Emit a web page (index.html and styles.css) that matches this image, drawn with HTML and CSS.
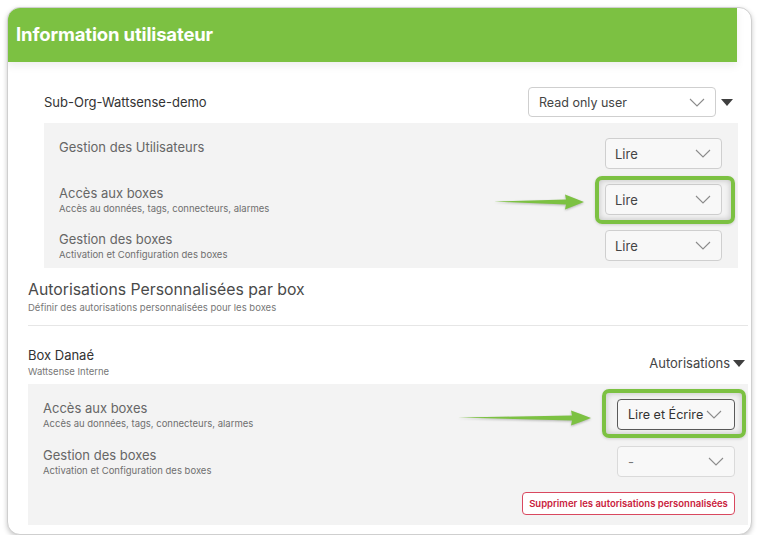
FILE: index.html
```html
<!DOCTYPE html>
<html>

<head>
    <meta charset="utf-8">
    <title>Information utilisateur</title>
    <meta name="viewport" content="width=device-width, initial-scale=1">
    <link rel="stylesheet" href="styles.css">
</head>

<body>
    <div class="card">
        <div class="card-header">
            <h1>Information utilisateur</h1>
        </div>

        <!-- organisation role -->
        <div class="org">
            <div class="org-row">
                <span class="org-name">Sub-Org-Wattsense-demo</span>
                <div class="org-role">
                    <div class="select select-role">
                        <span>Read only user</span>
                        <svg class="chevron" width="16" height="9" viewBox="0 0 16 9"><polyline points="1,1 8,8 15,1" /></svg>
                    </div>
                    <svg class="caret" width="12" height="7" viewBox="0 0 12 7"><polygon points="0,0 12,0 6,7" /></svg>
                </div>
            </div>

            <div class="perm-box">
                <div class="perm-row">
                    <div class="perm-label">
                        <div class="perm-title">Gestion des Utilisateurs</div>
                    </div>
                    <div class="select">
                        <span>Lire</span>
                        <svg class="chevron" width="16" height="9" viewBox="0 0 16 9"><polyline points="1,1 8,8 15,1" /></svg>
                    </div>
                </div>
                <div class="perm-row">
                    <div class="perm-label">
                        <div class="perm-title">Accès aux boxes</div>
                        <div class="perm-desc">Accès au données, tags, connecteurs, alarmes</div>
                    </div>
                    <div class="select highlight hl-one">
                        <span>Lire</span>
                        <svg class="chevron" width="16" height="9" viewBox="0 0 16 9"><polyline points="1,1 8,8 15,1" /></svg>
                        <svg class="arrow arrow-one" width="90" height="16" viewBox="0 0 90 16" preserveAspectRatio="none"><path d="M0 7.6 L72 5.6 L71 0.5 Q80 4 90 8 Q80 12 71 15.5 L72 10.4 Z" /></svg>
                    </div>
                </div>
                <div class="perm-row">
                    <div class="perm-label">
                        <div class="perm-title">Gestion des boxes</div>
                        <div class="perm-desc">Activation et Configuration des boxes</div>
                    </div>
                    <div class="select">
                        <span>Lire</span>
                        <svg class="chevron" width="16" height="9" viewBox="0 0 16 9"><polyline points="1,1 8,8 15,1" /></svg>
                    </div>
                </div>
            </div>
        </div>

        <!-- custom permissions per box -->
        <div class="custom">
            <div class="custom-head">
                <h2>Autorisations Personnalisées par box</h2>
                <p>Définir des autorisations personnalisées pour les boxes</p>
            </div>

            <div class="box-row">
                <div>
                    <div class="box-name">Box Danaé</div>
                    <div class="box-org">Wattsense Interne</div>
                </div>
                <div class="box-toggle">
                    Autorisations
                    <svg class="caret" width="12" height="7" viewBox="0 0 12 7"><polygon points="0,0 12,0 6,7" /></svg>
                </div>
            </div>

            <div class="perm-box perm-box-wide">
                <div class="perm-row">
                    <div class="perm-label">
                        <div class="perm-title">Accès aux boxes</div>
                        <div class="perm-desc">Accès au données, tags, connecteurs, alarmes</div>
                    </div>
                    <div class="select select-wide select-active highlight hl-two">
                        <span>Lire et Écrire</span>
                        <svg class="chevron" width="16" height="9" viewBox="0 0 16 9"><polyline points="1,1 8,8 15,1" /></svg>
                        <svg class="arrow arrow-two" width="133" height="16" viewBox="0 0 133 16" preserveAspectRatio="none"><path d="M0 7.6 L114 5.6 L113 0.5 Q123 4 133 8 Q123 12 113 15.5 L114 10.4 Z" /></svg>
                    </div>
                </div>
                <div class="perm-row">
                    <div class="perm-label">
                        <div class="perm-title">Gestion des boxes</div>
                        <div class="perm-desc">Activation et Configuration des boxes</div>
                    </div>
                    <div class="select select-wide select-empty">
                        <span>-</span>
                        <svg class="chevron" width="16" height="9" viewBox="0 0 16 9"><polyline points="1,1 8,8 15,1" /></svg>
                    </div>
                </div>
                <div class="perm-actions">
                    <button class="btn-danger">Supprimer les autorisations personnalisées</button>
                </div>
            </div>
        </div>
    </div>
</body>

</html>
```

FILE: styles.css
```css
body {
    margin: 0;
    background: #ffffff;
    font-family: Inter, "Noto Sans", sans-serif;
    color: #333333;
}

.card {
    margin: 7px 0 0 7px;
    width: 745px;
    box-sizing: border-box;
    padding-bottom: 9px;
    border: 1px solid #cfcfcf;
    border-radius: 13px;
    box-shadow: 0 2px 5px rgba(0, 0, 0, 0.22);
    overflow: hidden;
    background: #ffffff;
}

.card-header {
    margin: -1px 14px 0 -1px;
    height: 55px;
    background-color: #7cc142;
    display: flex;
    align-items: center;
    padding-left: 9px;
    border-top-left-radius: 13px;
    box-shadow: 0 4px 9px rgba(0, 0, 0, 0.07);
    position: relative;
}

.card-header h1 {
    margin: 0;
    padding-bottom: 2px;
    font-size: 18.5px;
    font-weight: 700;
    color: #ffffff;
    letter-spacing: -0.15px;
}

/* organisation */

.org {
    margin: 25px 13px 0 36px;
}

.org-row {
    display: flex;
    align-items: center;
    justify-content: space-between;
    height: 30px;
    margin-bottom: 6px;
}

.org-name {
    font-size: 13px;
    color: #333333;
}

.org-role {
    display: flex;
    align-items: center;
    gap: 5px;
    padding-right: 5px;
}

.caret {
    fill: #3f3f3f;
}

/* selects */

.select {
    position: relative;
    box-sizing: border-box;
    width: 117px;
    height: 31px;
    display: flex;
    align-items: center;
    justify-content: space-between;
    padding: 0 10px 0 9px;
    border: 1px solid #cfcfcf;
    border-radius: 4px;
    background: #f8f8f8;
    font-size: 13px;
    color: #444444;
    white-space: nowrap;
}

.select-role {
    width: 188px;
    height: 30px;
    background: #ffffff;
    padding-left: 10px;
    font-size: 12.5px;
}

.select-wide {
    width: 118px;
    padding-left: 10px;
}

.select-active {
    border-color: #5a5a5a;
    color: #333333;
    padding-right: 12px;
    font-size: 12.6px;
}

.select-empty {
    border-color: #dadada;
    color: #777777;
}

.chevron {
    flex-shrink: 0;
    fill: none;
    stroke: #8c8c8c;
    stroke-width: 1.1;
}

/* green annotation frames */

.highlight::before {
    content: "";
    position: absolute;
    border: 4px solid #7cc142;
    border-radius: 7px;
    box-shadow: inset 0 0 6px rgba(0, 0, 0, 0.22), 0 1px 3px rgba(0, 0, 0, 0.15);
    pointer-events: none;
}

.hl-one::before {
    left: -11px;
    right: -14px;
    top: -9px;
    bottom: -10px;
}

.hl-two::before {
    left: -16px;
    right: -12px;
    top: -11px;
    bottom: -9px;
}

.arrow {
    position: absolute;
    fill: #7cc142;
    filter: drop-shadow(0 1px 1px rgba(0, 0, 0, 0.25));
}

.arrow-one {
    left: -112px;
    top: 9px;
}

.arrow-two {
    left: -160px;
    top: 10px;
}

/* permission boxes */

.perm-box {
    background: #f3f3f3;
    padding: 15px 16px 7px 15px;
    display: flex;
    flex-direction: column;
    gap: 15px;
}

.perm-box-wide {
    padding: 15px 13px 10px 15px;
}

.perm-box-wide .perm-row + .perm-row {
    margin-top: 1px;
}

.perm-row {
    height: 31px;
    display: flex;
    align-items: flex-start;
    justify-content: space-between;
}

.perm-label {
    padding-top: 1px;
}

.perm-title {
    font-size: 13px;
    line-height: 16px;
    color: #666666;
}

.perm-desc {
    margin-top: 1px;
    font-size: 9.5px;
    line-height: 14px;
    color: #6f6f6f;
}

/* custom section */

.custom {
    margin: 0 3px 0 20px;
}

.custom-head {
    padding: 12px 0 10px;
    border-bottom: 1px solid #e6e6e6;
}

.custom-head h2 {
    margin: 0;
    font-size: 15.8px;
    line-height: 20px;
    font-weight: 400;
    color: #4a4a4a;
}

.custom-head p {
    margin: 1px 0 0;
    font-size: 9.5px;
    line-height: 14px;
    color: #777777;
}

.box-row {
    display: flex;
    align-items: center;
    justify-content: space-between;
    padding-top: 21px;
    margin-bottom: 5px;
}

.box-name {
    font-size: 13px;
    line-height: 16px;
    color: #333333;
}

.box-org {
    margin-top: 2px;
    font-size: 9.5px;
    line-height: 14px;
    color: #777777;
}

.box-toggle {
    display: flex;
    align-items: center;
    gap: 3px;
    padding-right: 3px;
    font-size: 13px;
    color: #444444;
}

.perm-actions {
    display: flex;
    justify-content: flex-end;
}

.btn-danger {
    height: 23px;
    width: 213px;
    padding: 0;
    border: 1px solid #d9485f;
    border-radius: 4px;
    background: #ffffff;
    color: #c9213c;
    font-family: Inter, "Noto Sans", sans-serif;
    font-size: 9.5px;
    font-weight: 600;
}
```
